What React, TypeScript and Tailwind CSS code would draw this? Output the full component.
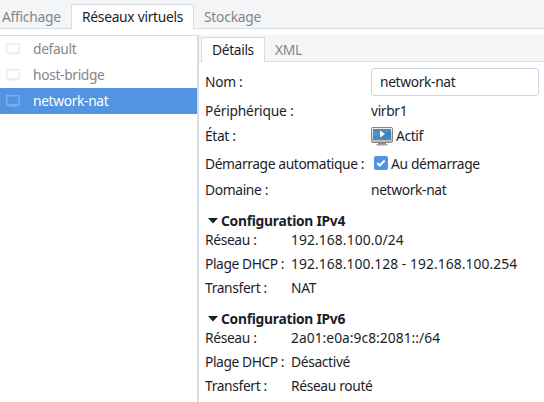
import { ReactNode } from "react";

const networks = [
  { name: "default", active: false },
  { name: "host-bridge", active: false },
  { name: "network-nat", active: true },
];

function ScreenIcon({ active }: { active: boolean }) {
  return (
    <svg width="14" height="12" viewBox="0 0 14 12" fill="none" className={active ? "text-[#7fabe6]" : "text-[#ecedf2]"}>
      <path d="M.75 .75h12.500v9H.75z" stroke="currentColor" strokeWidth="1.500" />
      <path d="M3 10h8v1l-1 .7H4L3 11z" fill="currentColor" />
    </svg>
  );
}

function MonitorIcon() {
  return (
    <svg width="22" height="19" viewBox="0 0 22 19">
      <defs>
        <linearGradient id="screen" x1="0" y1="0" x2="0" y2="1">
          <stop offset="0" stopColor="#3379b8" />
          <stop offset="1" stopColor="#4a8cc6" />
        </linearGradient>
        <linearGradient id="bezel" x1="0" y1="0" x2="0" y2="1">
          <stop offset="0" stopColor="#f0f0ee" />
          <stop offset="1" stopColor="#b5b7b3" />
        </linearGradient>
      </defs>
      <rect x=".5" y=".5" width="21" height="15" rx="1" fill="url(#bezel)" stroke="#858783" />
      <rect x="2" y="2" width="18" height="11" fill="url(#screen)" />
      <path d="M2 2h18v2L2 10z" fill="#fff" opacity=".12" />
      <path d="M9 3.500v7l5-3.500z" fill="#fff" />
      <path d="M7 16h8v1H7z" fill="#8b8d89" />
      <path d="M5.500 17h11v1.500h-11z" fill="#a0a29e" />
    </svg>
  );
}

function Row({ label, children, h, col = "w-[166px]" }: { label: string; children: ReactNode; h: string; col?: string }) {
  return (
    <div className={`flex items-center ${h}`}>
      <span className={`shrink-0 ${col}`}>{label}</span>
      {children}
    </div>
  );
}

function Section({ title, network, dhcp, forward, numeric }: { title: string; network: string; dhcp: string; forward: string; numeric: boolean }) {
  return (
    <section className="mb-3">
      <h2 className="flex h-[14px] items-center pl-[3px] font-bold tracking-[-0.26px]">
        <svg width="10" height="6" viewBox="0 0 10 6" className="mr-[3px]">
          <path d="M0 0h10L5 5.500z" fill="currentColor" />
        </svg>
        {title}
      </h2>
      <Row label="Réseau :" h="h-6" col="w-[86px]">
        <span className={numeric ? "tracking-[0.11px]" : "tracking-[0.04px]"}>{network}</span>
      </Row>
      <Row label="Plage DHCP :" h="h-6" col="w-[86px] tracking-[-0.42px]">
        <span className={numeric ? "tracking-[0.09px]" : ""}>{dhcp}</span>
      </Row>
      <Row label="Transfert :" h="h-6" col="w-[86px]">{forward}</Row>
    </section>
  );
}

export default function App() {
  return (
    <div className="flex h-[402px] w-[544px] flex-col overflow-hidden whitespace-nowrap bg-white font-['Noto_Sans',sans-serif] text-[13.8px] leading-[18px] tracking-[-0.35px] text-[#1b1d29]">
      <nav className="flex h-[29px] shrink-0 items-end border-b border-[#d8dce3] bg-[#f4f5f7] text-[#84868a]">
        <span className="w-[71px] pb-[2px] pl-[2px] tracking-[-0.25px]">Affichage</span>
        <span className="-mb-px h-[25px] w-[123px] border border-b-0 border-[#d8dce3] bg-white pl-[10px] pt-[3px] tracking-[-0.28px] text-[#1b1d29]">Réseaux virtuels</span>
        <span className="pb-[2px] pl-[10px] tracking-[-0.22px]">Stockage</span>
      </nav>
      <div className="flex min-h-0 flex-1 pt-[6px]">
        <aside className="w-[199px] shrink-0 border-r-2 border-t border-[#d8dce3]">
          {networks.map((n) => (
            <div key={n.name} className={`flex h-[26px] items-center gap-[13px] pl-[6px] ${n.active ? "bg-[#5294e2] text-white" : "text-[#84868a]"}`}>
              <ScreenIcon active={n.active} />
              <span>{n.name}</span>
            </div>
          ))}
        </aside>
        <main className="min-w-0 flex-1">
          <nav className="flex h-[27px] items-end border-b border-[#d8dce3] bg-[#f4f5f7] pl-[2px] text-[#84868a]">
            <span className="-mb-px h-[25px] w-[64px] border border-b-0 border-[#d8dce3] bg-white pl-[10px] pt-[3px] text-[#1b1d29]">Détails</span>
            <span className="pb-[2px] pl-[10px]">XML</span>
          </nav>
          <div className="pl-[6px] pt-[6px]">
            <Row label="Nom :" h="mb-[3px] h-7">
              <input readOnly defaultValue="network-nat" className="h-7 w-[168px] rounded-[3px] border border-[#cfd6e6] bg-white px-2 pb-[2px] outline-none" />
            </Row>
            <Row label="Périphérique :" h="h-6" col="w-[166px] tracking-[-0.22px]">virbr1</Row>
            <Row label="État :" h="h-[26px]">
              <MonitorIcon />
              <span className="ml-[3px]">Actif</span>
            </Row>
            <Row label="Démarrage automatique :" h="h-[30px]" col="w-[166px] tracking-[-0.39px]">
              <span className="ml-[3px] mr-[3px] mt-[-2px] flex size-[14px] items-center justify-center rounded-[2px] bg-[#5294e2]">
                <svg width="10" height="10" viewBox="0 0 10 10" fill="none">
                  <path d="M1.300 5l2.500 2.500L8.700 2.500" stroke="#fff" strokeWidth="2" />
                </svg>
              </span>
              <span>Au démarrage</span>
            </Row>
            <Row label="Domaine :" h="mb-[13px] h-[22px]">network-nat</Row>
            <Section title="Configuration IPv4" network="192.168.100.0/24" dhcp="192.168.100.128 - 192.168.100.254" forward="NAT" numeric />
            <Section title="Configuration IPv6" network="2a01:e0a:9c8:2081::/64" dhcp="Désactivé" forward="Réseau routé" numeric={false} />
          </div>
        </main>
      </div>
    </div>
  );
}
